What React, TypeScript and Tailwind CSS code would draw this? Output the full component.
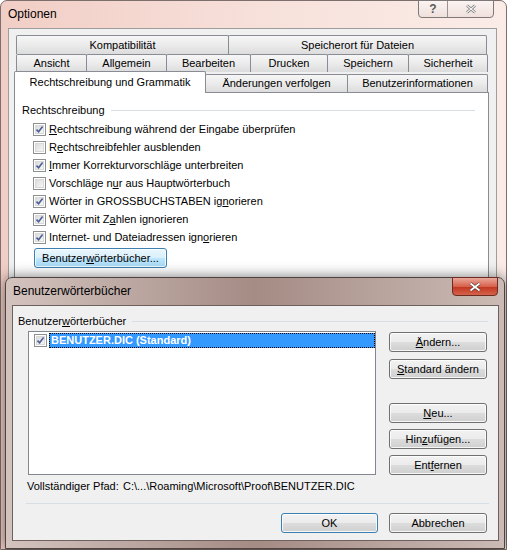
import type { ReactNode } from 'react';
import clsx from 'clsx';

const btnGray =
  'border-[#707070] bg-[linear-gradient(#f2f2f2,#ebebeb_50%,#dddddd_50%,#cfcfcf)]';
const btnBlue =
  'border-[#3c7fb1] bg-[linear-gradient(#eaf6fd,#d9f0fc_50%,#bee6fd_50%,#a7d9f5)]';

function Button({ children, className, focus }: { children: ReactNode; className?: string; focus?: boolean }) {
  return (
    <div
      className={clsx(
        'h-[20px] rounded-[3px] border flex items-center justify-center shadow-[inset_0_0_0_1px_rgba(255,255,255,0.8)]',
        focus ? btnBlue : btnGray,
        className
      )}
    >
      {children}
    </div>
  );
}

function Check({ checked }: { checked?: boolean }) {
  return (
    <div className="w-[13px] h-[13px] border border-[#8e8f8f] bg-white p-px shrink-0">
      <div className="w-full h-full border border-[#d8d8d8] bg-[linear-gradient(135deg,#dcdcdc,#f6f6f6)] relative">
        {checked && (
          <svg viewBox="0 0 9 9" className="absolute -left-px -top-px w-[9px] h-[9px]">
            <path d="M1.5 4.6 L3.6 6.8 L7.6 1.6" fill="none" stroke="#4a5f97" strokeWidth="1.6" />
          </svg>
        )}
      </div>
    </div>
  );
}

function Tab({ children, className }: { children: ReactNode; className?: string }) {
  return (
    <div
      className={clsx(
        'border-l border-t border-r border-[#898c95] -mr-px rounded-t-[2px] flex items-center justify-center bg-[linear-gradient(#f6f6f6,#ebebeb_50%,#dcdcdc)]',
        className
      )}
    >
      {children}
    </div>
  );
}

const options: [boolean, ReactNode][] = [
  [true, <><u>R</u>echtschreibung während der Eingabe überprüfen</>],
  [false, <>R<u>e</u>chtschreibfehler ausblenden</>],
  [true, <><u>I</u>mmer Korrekturvorschläge unterbreiten</>],
  [false, <>Vorschläge n<u>u</u>r aus Hauptwörterbuch</>],
  [true, <>Wörter in GROSSBUCHSTABEN ig<u>n</u>orieren</>],
  [true, <>Wörter mit Z<u>a</u>hlen ignorieren</>],
  [true, <>Internet- und Dateiadressen ign<u>o</u>rieren</>],
];

export default function App() {
  return (
    <div className="relative w-[507px] h-[550px] overflow-hidden bg-white text-[11px] leading-[13px] text-black font-['Liberation_Sans',Arial,sans-serif]">
      {/* Optionen window */}
      <div className="h-full rounded-t-[7px] border border-[#7d6f6c] bg-linear-to-r from-[#f1cec5] via-[#f7e0da] to-[#fbece7] flex flex-col">
        <div className="h-[27px] flex items-center pl-[7px] relative">
          <span className="text-[12px]">Optionen</span>
          <div className="absolute right-[12px] -top-px flex h-[18px] rounded-b-[4px] border border-[#7e7878] overflow-hidden bg-[linear-gradient(#fbf4f2,#f0e0dc)]">
            <div className="w-[29px] border-r border-[#9a9392] flex items-center justify-center text-[12px] font-bold text-[#5a5a5a] leading-none">?</div>
            <div className="w-[45px] flex items-center justify-center">
              <svg viewBox="0 0 12 10" className="w-[12px] h-[10px]">
                <path d="M2 1.5 L10 8.5 M10 1.5 L2 8.5" stroke="#707070" strokeWidth="2.6" />
                <path d="M2 1.5 L10 8.5 M10 1.5 L2 8.5" stroke="#f4f4f4" strokeWidth="1.2" />
              </svg>
            </div>
          </div>
        </div>
        <div className="ml-[7px] mr-[9px] flex-1 border border-[#9d9d9d] bg-[#f0f0f0] pt-[6px] pl-[5px]">
          <div className="w-[475px]">
            <div className="flex pl-[2px] h-[19px]">
              <Tab className="w-[213px]">Kompatibilität</Tab>
              <Tab className="w-[259px]">Speicherort für Dateien</Tab>
            </div>
            <div className="flex pl-[2px] h-[18px]">
              <Tab className="w-[71px]">Ansicht</Tab>
              <Tab className="w-[81px]">Allgemein</Tab>
              <Tab className="w-[85px]">Bearbeiten</Tab>
              <Tab className="w-[78px]">Drucken</Tab>
              <Tab className="w-[82px]">Speichern</Tab>
              <Tab className="w-[80px]">Sicherheit</Tab>
            </div>
            <div className="flex items-end h-[21px] -mt-px">
              <div className="relative z-10 -mb-px h-[22px] w-[192px] -mr-px border-l border-t border-r border-[#898c95] rounded-t-[2px] bg-white flex items-center justify-center">
                Rechtschreibung und Grammatik
              </div>
              <Tab className="h-[18px] w-[143px]">Änderungen verfolgen</Tab>
              <Tab className="h-[18px] w-[141px]">Benutzerinformationen</Tab>
            </div>
            <div className="h-[200px] border border-[#898c95] bg-white pt-[11px] pl-[7px]">
              <div className="flex items-center gap-[6px] mr-[13px]">
                <span>Rechtschreibung</span>
                <div className="flex-1 h-px bg-[#d5dfe5]" />
              </div>
              <div className="mt-[3px] pl-[11px] flex flex-col">
                {options.map(([c, label], i) => (
                  <div key={i} className="h-[18px] flex items-center gap-[3px]">
                    <Check checked={c} />
                    <span>{label}</span>
                  </div>
                ))}
              </div>
              <Button focus className="ml-[12px] mt-[2px] w-[133px]">
                Benutzer<u>w</u>örterbücher...
              </Button>
            </div>
          </div>
        </div>
      </div>

      {/* Benutzerwörterbücher dialog */}
      <div className="absolute left-[5px] top-[277px] w-[500px] h-[272px] rounded-t-[7px] border border-[#4f4341] bg-linear-to-r from-[#d3c3bf] via-[#a58c85] to-[#cbbab5] shadow-[0_0_14px_rgba(0,0,0,0.55)] flex flex-col">
        <div className="h-[27px] flex items-center pl-[7px] relative">
          <span className="text-[12px]">Benutzerwörterbücher</span>
          <div className="absolute right-[6px] -top-px w-[46px] h-[19px] rounded-b-[4px] border border-[#6e2b22] bg-[linear-gradient(#e9a89b,#d8614c_50%,#c0331d_50%,#d5634d)] flex items-center justify-center">
            <svg viewBox="0 0 14 10" className="w-[14px] h-[10px]">
              <path d="M2.5 1.5 L11.5 8.5 M11.5 1.5 L2.5 8.5" stroke="#5a3a36" strokeWidth="3.2" />
              <path d="M2.5 1.5 L11.5 8.5 M11.5 1.5 L2.5 8.5" stroke="#ffffff" strokeWidth="1.8" />
            </svg>
          </div>
        </div>
        <div className="ml-[6px] mr-[5px] h-[236px] border border-[#6d605d] bg-[#f0f0f0] pt-[9px] flex flex-col">
          <div className="flex items-center gap-[6px] pl-[5px] mr-[10px] h-[13px]">
            <span>
              Benutzer<u>w</u>örterbücher
            </span>
            <div className="flex-1 h-px bg-[#d5dfe5]" />
          </div>
          <div className="flex mt-[3px] pl-[15px]">
            <div className="w-[348px] h-[144px] border border-[#828790] bg-white pt-[1px] pl-[5px]">
              <div className="flex items-center h-[15px]">
                <Check checked />
                <div className="ml-[2px] flex-1 h-[15px] bg-[#3399ff] border border-dotted border-[#000] text-white font-bold flex items-center pl-[1px]">
                  BENUTZER.DIC (Standard)
                </div>
              </div>
            </div>
            <div className="ml-[13px] mt-[1px] flex flex-col w-[98px]">
              <Button>
                <u>Ä</u>ndern...
              </Button>
              <Button className="mt-[7px]">
                <u>S</u>tandard ändern
              </Button>
              <Button className="mt-[24px]">
                <u>N</u>eu...
              </Button>
              <Button className="mt-[6px]">
                Hin<u>z</u>ufügen...
              </Button>
              <Button className="mt-[6px]">
                Ent<u>f</u>ernen
              </Button>
            </div>
          </div>
          <div className="mt-[5px] pl-[14px] flex h-[13px]">
            <span className="w-[96px]">Vollständiger Pfad:</span>
            <span>C:\...\Roaming\Microsoft\Proof\BENUTZER.DIC</span>
          </div>
          <div className="mt-[10px] ml-[13px] mr-[9px] h-px bg-[#d5dfe5]" />
          <div className="mt-[9px] flex justify-end pr-[11px] gap-[11px]">
            <Button focus className="w-[97px] bg-[linear-gradient(#f2f2f2,#ebebeb_50%,#dddddd_50%,#cfcfcf)]">
              OK
            </Button>
            <Button className="w-[98px]">Abbrechen</Button>
          </div>
        </div>
      </div>
    </div>
  );
}
